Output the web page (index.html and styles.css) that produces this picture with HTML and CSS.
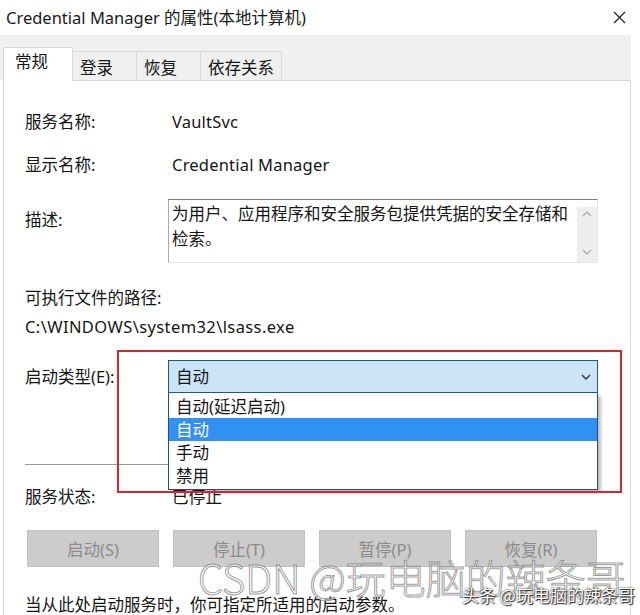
FILE: index.html
```html
<!DOCTYPE html>
<html>
<head>
<meta charset="utf-8">
<meta name="viewport" content="width=device-width, initial-scale=1.0">
<link rel="stylesheet" href="styles.css">
</head>
<body>
<div class="titlebar">
	<span class="title">Credential Manager 的属性(本地计算机)</span>
	<svg class="close" width="13" height="13" viewBox="0 0 13 13"><path d="M1 1L12 12M12 1L1 12" stroke="#222" stroke-width="1.2" fill="none"/></svg>
</div>
<div class="tabs">
	<div class="tab active">常规</div>
	<div class="tab">登录</div>
	<div class="tab">恢复</div>
	<div class="tab">依存关系</div>
</div>
<div class="panel">
	<div class="field f-name"><span class="label">服务名称:</span><span class="value">VaultSvc</span></div>
	<div class="field f-display"><span class="label">显示名称:</span><span class="value">Credential Manager</span></div>
	<div class="field f-desc">
		<span class="label">描述:</span>
		<div class="desc-box">
			<div class="desc-text">为用户、应用程序和安全服务包提供凭据的安全存储和检索。</div>
			<div class="scroll">
				<svg width="10" height="6" viewBox="0 0 10 6"><path d="M1 5L5 1L9 5" stroke="#a8a8a8" stroke-width="1.2" fill="none"/></svg>
				<svg width="10" height="6" viewBox="0 0 10 6"><path d="M1 1L5 5L9 1" stroke="#a8a8a8" stroke-width="1.2" fill="none"/></svg>
			</div>
		</div>
	</div>
	<div class="path-label">可执行文件的路径:</div>
	<div class="path-value">C:\WINDOWS\system32\lsass.exe</div>
	<div class="field f-start">
		<span class="label">启动类型(E):</span>
		<div class="select">
			<span>自动</span>
			<svg class="chev" width="10" height="6" viewBox="0 0 10 6"><path d="M1 1L5 5L9 1" stroke="#333" stroke-width="1.4" fill="none"/></svg>
			<div class="options">
				<div class="opt">自动(延迟启动)</div>
				<div class="opt sel">自动</div>
				<div class="opt">手动</div>
				<div class="opt">禁用</div>
			</div>
		</div>
		<div class="mark"></div>
	</div>
	<div class="sep"></div>
	<div class="field f-status"><span class="label">服务状态:</span><span class="value">已停止</span></div>
	<div class="buttons">
		<div class="btn">启动(S)</div>
		<div class="btn">停止(T)</div>
		<div class="btn">暂停(P)</div>
		<div class="btn">恢复(R)</div>
	</div>
	<div class="note">当从此处启动服务时，你可指定所适用的启动参数。</div>
</div>
<div class="wm-big">CSDN @玩电脑的辣条哥</div>
<div class="wm-small">头条 @玩电脑的辣条哥</div>
</body>
</html>
```

FILE: styles.css
```css
* {
	box-sizing: border-box;
}
body {
	margin: 0;
	width: 640px;
	height: 615px;
	overflow: hidden;
	position: relative;
	background: #fff;
	color: #151515;
	font-family: "Noto Sans", "Noto Sans CJK SC", sans-serif;
	font-size: 16.5px;
}
.titlebar {
	height: 35px;
	display: flex;
	align-items: center;
	justify-content: space-between;
	padding: 0 14px 0 6px;
}
.title {
	line-height: 24px;
	color: #1a1a1a;
}
.tabs {
	width: 631px;
	height: 45px;
	background: #f0f0f0;
	display: flex;
	align-items: flex-end;
	padding-left: 3px;
}
.tab {
	height: 29px;
	min-width: 65px;
	padding: 4px 7px 0 7px;
	line-height: 24px;
	border: 1px solid #d9d9d9;
	border-bottom: none;
	margin-left: -1px;
	background: #f0f0f0;
}
.tab:first-child {
	margin-left: 0;
}
.tab.active {
	height: 34px;
	min-width: 70px;
	padding: 2px 0 0 11px;
	margin-bottom: -1px;
	background: #fff;
	position: relative;
	z-index: 1;
}
.panel {
	position: relative;
	margin-left: 3px;
	width: 628px;
	height: 535px;
	border: 1px solid #d9d9d9;
	border-bottom: none;
	padding-left: 21px;
}
.field {
	display: flex;
	align-items: center;
	line-height: 24px;
}
.label {
	width: 143px;
	flex: none;
}
.value {
	padding-left: 4px;
	letter-spacing: 0.2px;
}
.f-name { margin-top: 29px; }
.f-display { margin-top: 19px; }
.f-desc {
	margin-top: 22px;
	align-items: flex-start;
}
.f-desc .label {
	padding-top: 9px;
}
.desc-box {
	position: relative;
	width: 430px;
	height: 64px;
	border: 1px solid #e6e6e6;
	border-top-color: #7d7d7d;
	border-left-color: #a9a9a9;
	padding: 1px 22px 0 3px;
}
.desc-text {
	line-height: 25px;
}
.scroll {
	position: absolute;
	right: 0;
	top: 7px;
	bottom: 0;
	width: 20px;
	background: #ededed;
	display: flex;
	flex-direction: column;
	align-items: center;
	justify-content: space-between;
	padding: 4px 0 7px;
}
.path-label {
	margin-top: 23px;
	line-height: 24px;
}
.path-value {
	margin-top: 5px;
	line-height: 24px;
	letter-spacing: 0.4px;
}
.f-start {
	margin-top: 21px;
	position: relative;
}
.select {
	position: relative;
	width: 430px;
	height: 33px;
	border: 1px solid #1d5692;
	background: #cce4f7;
	padding: 0 6px 0 7px;
	display: flex;
	align-items: center;
	justify-content: space-between;
}
.options {
	position: absolute;
	left: -1px;
	top: 32px;
	width: 430px;
	background: #fff;
	border: 1px solid #1d4f82;
	border-top: none;
	padding: 2px 0;
	box-shadow: 3px 3px 3px rgba(0, 0, 0, 0.25);
	z-index: 2;
}
.opt {
	height: 23px;
	line-height: 23px;
	padding-left: 7px;
}
.opt.sel {
	background: #3191f2;
	color: #fff;
}
.mark {
	position: absolute;
	left: 92px;
	top: -10px;
	width: 505px;
	height: 143px;
	border: 2.5px solid #d3262f;
	z-index: 3;
}
.sep {
	margin-top: 71px;
	width: 573px;
	height: 1px;
	background: #9a9a9a;
}
.f-status { margin-top: 20px; }
.buttons {
	margin-top: 21px;
	margin-left: 2px;
	width: 570px;
	display: flex;
	justify-content: space-between;
}
.btn {
	width: 132px;
	height: 37px;
	background: #cccccc;
	border: 1px solid #c2c2c2;
	color: #8b8b8b;
	display: flex;
	align-items: center;
	justify-content: center;
}
.note {
	margin-top: 26px;
	line-height: 24px;
}
.wm-big {
	position: absolute;
	left: 198px;
	top: 557px;
	font-family: "Noto Sans CJK SC", sans-serif;
	font-size: 40px;
	font-weight: 300;
	line-height: 40px;
	white-space: nowrap;
	color: rgba(255, 255, 255, 0.7);
	-webkit-text-stroke: 1px rgba(90, 90, 90, 0.6);
}
.wm-small {
	position: absolute;
	left: 462px;
	top: 585px;
	font-family: "Noto Sans CJK SC", sans-serif;
	font-size: 17px;
	line-height: 20px;
	white-space: nowrap;
	color: #fff;
	text-shadow: 0 0 2px #000, 1px 1px 1px #333;
}
```
